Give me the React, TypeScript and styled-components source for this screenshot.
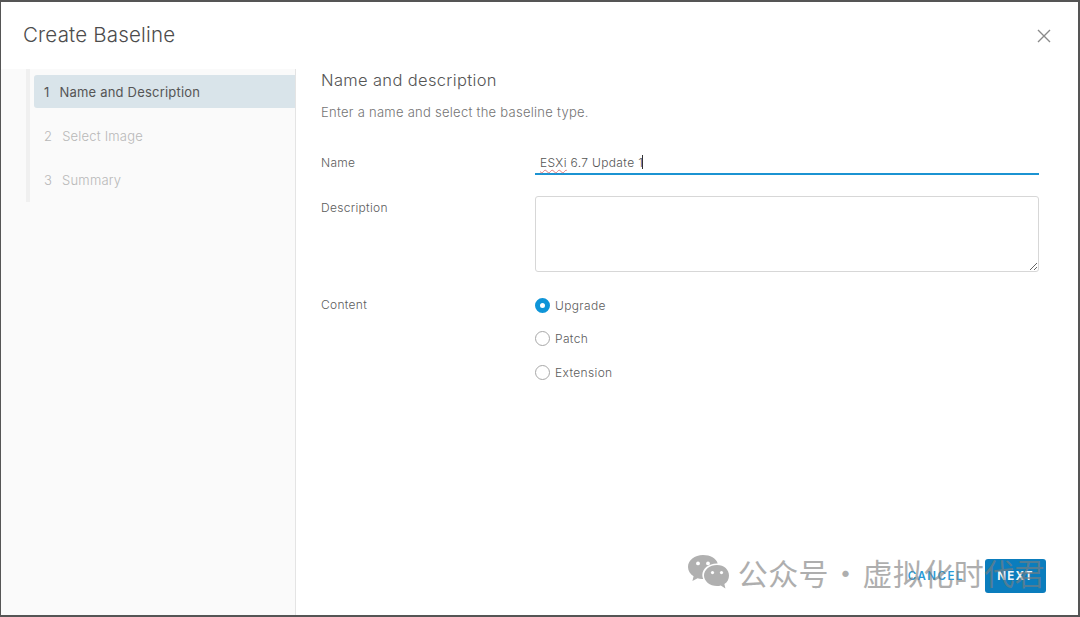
import React from 'react';
import styled, { createGlobalStyle } from 'styled-components';

const GlobalStyle = createGlobalStyle`
  html, body {
    margin: 0;
    padding: 0;
    background: #555;
  }
  * {
    box-sizing: border-box;
  }
`;

const Page = styled.div`
  width: 1080px;
  height: 617px;
  padding: 2px 2px 2px 1px;
  background: #555;
  overflow: hidden;
  font-family: "Inter", "Noto Sans", sans-serif;
`;

const Dialog = styled.div`
  position: relative;
  height: 100%;
  display: flex;
  flex-direction: column;
  background: #fff;
`;

const Header = styled.header`
  height: 67px;
  flex: none;
  display: flex;
  align-items: center;
  justify-content: space-between;
  padding: 0 26px 2px 22px;
`;

const Title = styled.h1`
  margin: 0;
  font-size: 20.5px;
  font-weight: 300;
  letter-spacing: 0.2px;
  color: #4c4c4c;
`;

const CloseButton = styled.button`
  width: 16px;
  height: 16px;
  margin-top: 2px;
  padding: 0;
  border: 0;
  background: none;
  color: #8a8a8a;
  line-height: 0;
`;

const Body = styled.div`
  flex: 1;
  min-height: 0;
  display: flex;
`;

const Sidebar = styled.nav`
  width: 295px;
  flex: none;
  padding-left: 25px;
  background: #fafafa;
  border-right: 1px solid #e4e4e4;
`;

const Steps = styled.ol`
  margin: 0;
  padding: 6px 0 0 4px;
  height: 133px;
  list-style: none;
  border-left: 4px solid #f0f0f0;
  display: flex;
  flex-direction: column;
  gap: 11px;
`;

const Step = styled.li<{ $active?: boolean }>`
  height: 33px;
  display: flex;
  align-items: center;
  gap: 10px;
  padding: 1px 0 0 10px;
  font-size: 13px;
  font-weight: ${p => (p.$active ? 400 : 300)};
  letter-spacing: 0.2px;
  color: ${p => (p.$active ? '#555' : '#b8b8b8')};
  background: ${p => (p.$active ? '#d9e4ea' : 'transparent')};
  border-radius: 3px 0 0 3px;
`;

const Main = styled.main`
  position: relative;
  flex: 1;
  display: flex;
  flex-direction: column;
  padding: 0 39px 22px 25px;
`;

const Heading = styled.h2`
  margin: 0;
  height: 22px;
  line-height: 22px;
  font-size: 16.5px;
  font-weight: 300;
  letter-spacing: 0.35px;
  color: #555;
`;

const Intro = styled.p`
  margin: 12px 0 0;
  line-height: 18px;
  font-size: 13px;
  font-weight: 300;
  letter-spacing: 0.27px;
  color: #747474;
`;

const Form = styled.form`
  margin-top: 33px;
  display: grid;
  grid-template-columns: 214px 1fr;
  align-items: start;
`;

const Label = styled.label<{ $offset?: number }>`
  margin-top: ${p => p.$offset ?? 0}px;
  line-height: 18px;
  font-size: 12px;
  font-weight: 300;
  letter-spacing: 0.3px;
  color: #5c5c5c;
`;

const NameField = styled.div`
  height: 21px;
  margin-bottom: 21px;
  padding: 0 0 0 5px;
  line-height: 18px;
  font-size: 12px;
  font-weight: 300;
  letter-spacing: 0.35px;
  color: #555;
  border-bottom: 2px solid #1b93d2;
`;

const Misspelled = styled.span`
  text-decoration: underline wavy #e08080 1px;
  text-underline-offset: 2px;
`;

const Caret = styled.span`
  display: inline-block;
  width: 1px;
  height: 14px;
  margin-left: -1px;
  vertical-align: -2px;
  background: #333;
`;

const DescriptionInput = styled.textarea`
  display: block;
  width: 100%;
  height: 76px;
  margin-bottom: 24px;
  border: 1px solid #d7d7d7;
  border-radius: 3px;
  background: #fff;
  outline: none;
`;

const RadioGroup = styled.div`
  display: flex;
  flex-direction: column;
  gap: 15.5px;
`;

const RadioRow = styled.div`
  height: 18px;
  display: flex;
  align-items: center;
  gap: 5px;
  font-size: 12px;
  font-weight: 300;
  letter-spacing: 0.35px;
  color: #5c5c5c;
`;

const RadioMark = styled.span<{ $checked?: boolean }>`
  width: 15px;
  height: 15px;
  flex: none;
  border-radius: 50%;
  border: ${p => (p.$checked ? '5px solid #0f95d8' : '1px solid #a8a8a8')};
  background: #fff;
`;

const Footer = styled.footer`
  margin-top: auto;
  display: flex;
  align-items: center;
  justify-content: flex-end;
  gap: 21px;
  margin-right: -7px;
`;

const TextButton = styled.button`
  padding: 0;
  border: 0;
  background: none;
  font-family: inherit;
  font-size: 11.5px;
  font-weight: 600;
  letter-spacing: 1.5px;
  color: #2b9ad6;
`;

const PrimaryButton = styled.button`
  width: 61px;
  height: 34px;
  padding: 0;
  border: 0;
  border-radius: 3px;
  background: #0b7dbd;
  font-family: inherit;
  font-size: 11.5px;
  font-weight: 700;
  letter-spacing: 1.2px;
  color: #eef6fb;
`;

const Watermark = styled.div`
  position: absolute;
  right: 33px;
  bottom: 25px;
  display: flex;
  align-items: center;
  gap: 8px;
  pointer-events: none;
  opacity: 0.62;
  color: #7d7d7d;
  font-family: "Noto Sans CJK SC", sans-serif;
  font-size: 30px;
  letter-spacing: 0.4px;
  word-spacing: -5.5px;
  line-height: 36px;
  white-space: nowrap;
`;

const WeChatMark = () => (
  <svg width="42" height="34" viewBox="0 0 42 34" aria-hidden="true">
    <path fill="#808080" d="M15 0C6.7 0 0 5.4 0 12c0 3.8 2.2 7.1 5.6 9.3L4.4 26l5.2-2.7c1.4.4 2.6.7 4.2.7h1.4c-.6-1.3-.9-2.6-.9-4 0-6.6 6.4-11.6 14.5-11.6h.9C28.3 3.4 22.2 0 15 0z" />
    <circle fill="#fff" cx="10" cy="8.4" r="1.9" />
    <circle fill="#fff" cx="20" cy="8.4" r="1.9" />
    <path fill="#808080" d="M29 10c-7.2 0-13 4.7-13 10.5S21.8 31 29 31c1.4 0 2.6-.2 3.8-.6l4.6 3-1-4.3c3-2 4.6-5 4.6-8.6C41 14.7 36.2 10 29 10z" />
    <circle fill="#fff" cx="24.5" cy="17.6" r="1.6" />
    <circle fill="#fff" cx="33.5" cy="17.6" r="1.6" />
  </svg>
);

const steps = ['Name and Description', 'Select Image', 'Summary'];
const contentTypes = ['Upgrade', 'Patch', 'Extension'];

export default function App(): JSX.Element {
  return (
    <Page>
      <GlobalStyle />
      <Dialog>
        <Header>
          <Title>Create Baseline</Title>
          <CloseButton aria-label="Close">
            <svg width="16" height="16" viewBox="0 0 16 16" fill="none" stroke="currentColor" strokeWidth="1.4">
              <path d="M2 2l12 12M14 2L2 14" />
            </svg>
          </CloseButton>
        </Header>
        <Body>
          <Sidebar>
            <Steps>
              {steps.map((step, i) => (
                <Step key={step} $active={i === 0}>
                  <span>{i + 1}</span>
                  <span>{step}</span>
                </Step>
              ))}
            </Steps>
          </Sidebar>
          <Main>
            <Heading>Name and description</Heading>
            <Intro>Enter a name and select the baseline type.</Intro>
            <Form>
              <Label>Name</Label>
              <NameField>
                <Misspelled>ESXi</Misspelled> 6.7 Update 1<Caret />
              </NameField>
              <Label $offset={3}>Description</Label>
              <DescriptionInput />
              <Label>Content</Label>
              <RadioGroup>
                {contentTypes.map((type, i) => (
                  <RadioRow key={type}>
                    <RadioMark $checked={i === 0} />
                    {type}
                  </RadioRow>
                ))}
              </RadioGroup>
            </Form>
            <Footer>
              <TextButton type="button">CANCEL</TextButton>
              <PrimaryButton type="button">NEXT</PrimaryButton>
            </Footer>
          </Main>
        </Body>
        <Watermark>
          <WeChatMark />
          <span>公众号 · 虚拟化时代君</span>
        </Watermark>
      </Dialog>
    </Page>
  );
}
